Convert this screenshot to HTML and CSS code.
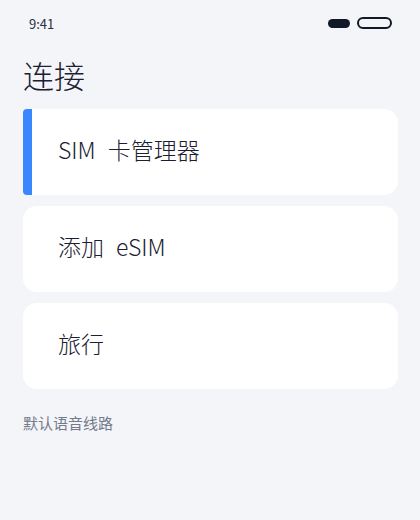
FILE: index.html
```html
<!DOCTYPE html>
<html lang="zh-CN">
<head>
  <meta charset="UTF-8">
  <title>连接</title>
  <link rel="stylesheet" href="styles.css">
</head>
<body>
  <div class="screen">
    <!-- Status bar -->
    <div class="status-bar">
      <span class="time">9:41</span>
      <div class="status-icons">
        <span class="pill pill-filled"></span>
        <span class="pill pill-outline"></span>
      </div>
    </div>

    <h1 class="page-title">连接</h1>

    <div class="card-list">
      <div class="card card-active">SIM 卡管理器</div>
      <div class="card">添加 eSIM</div>
      <div class="card">旅行</div>
    </div>

    <div class="section-label">默认语音线路</div>
  </div>
</body>
</html>
```

FILE: styles.css
```css
:root {
  --bg: #f4f5f8;
  --card: #ffffff;
  --text: #1b2030;
  --muted: #737a8a;
  --accent: #3a86ff;
  --dark: #111827;
}

* {
  box-sizing: border-box;
}

body {
  margin: 0;
  background: var(--bg);
  color: var(--text);
  font-family: "Noto Sans CJK SC", "Noto Sans", sans-serif;
}

.screen {
  width: 420px;
  height: 520px;
  padding: 0 22px 0 23px;
}

.status-bar {
  height: 46px;
  display: flex;
  align-items: center;
  justify-content: space-between;
  padding: 0 6px 0 6px;
}

.time {
  font-size: 13px;
  line-height: 1;
  color: #2a2f3a;
}

.status-icons {
  display: flex;
  align-items: center;
  gap: 7px;
}

.pill {
  display: block;
  border-radius: 6px;
}

.pill-filled {
  width: 22px;
  height: 9px;
  background: var(--dark);
}

.pill-outline {
  width: 35px;
  height: 12px;
  border: 2px solid var(--dark);
}

.page-title {
  margin: 12px 0 17px 0;
  font-size: 31px;
  font-weight: 300;
  line-height: 34px;
}

.card-list {
  display: flex;
  flex-direction: column;
  gap: 11px;
}

.card {
  height: 86px;
  background: var(--card);
  border-radius: 14px;
  display: flex;
  align-items: center;
  padding: 0 0 5px 35px;
  font-size: 23px;
  font-weight: 300;
  line-height: 1;
  word-spacing: 7px;
}

.card-active {
  border-left: 9px solid var(--accent);
  border-radius: 4px 14px 14px 4px;
  padding-left: 26px;
}

.section-label {
  margin-top: 25px;
  font-size: 15px;
  line-height: 18px;
  color: var(--muted);
}
```
